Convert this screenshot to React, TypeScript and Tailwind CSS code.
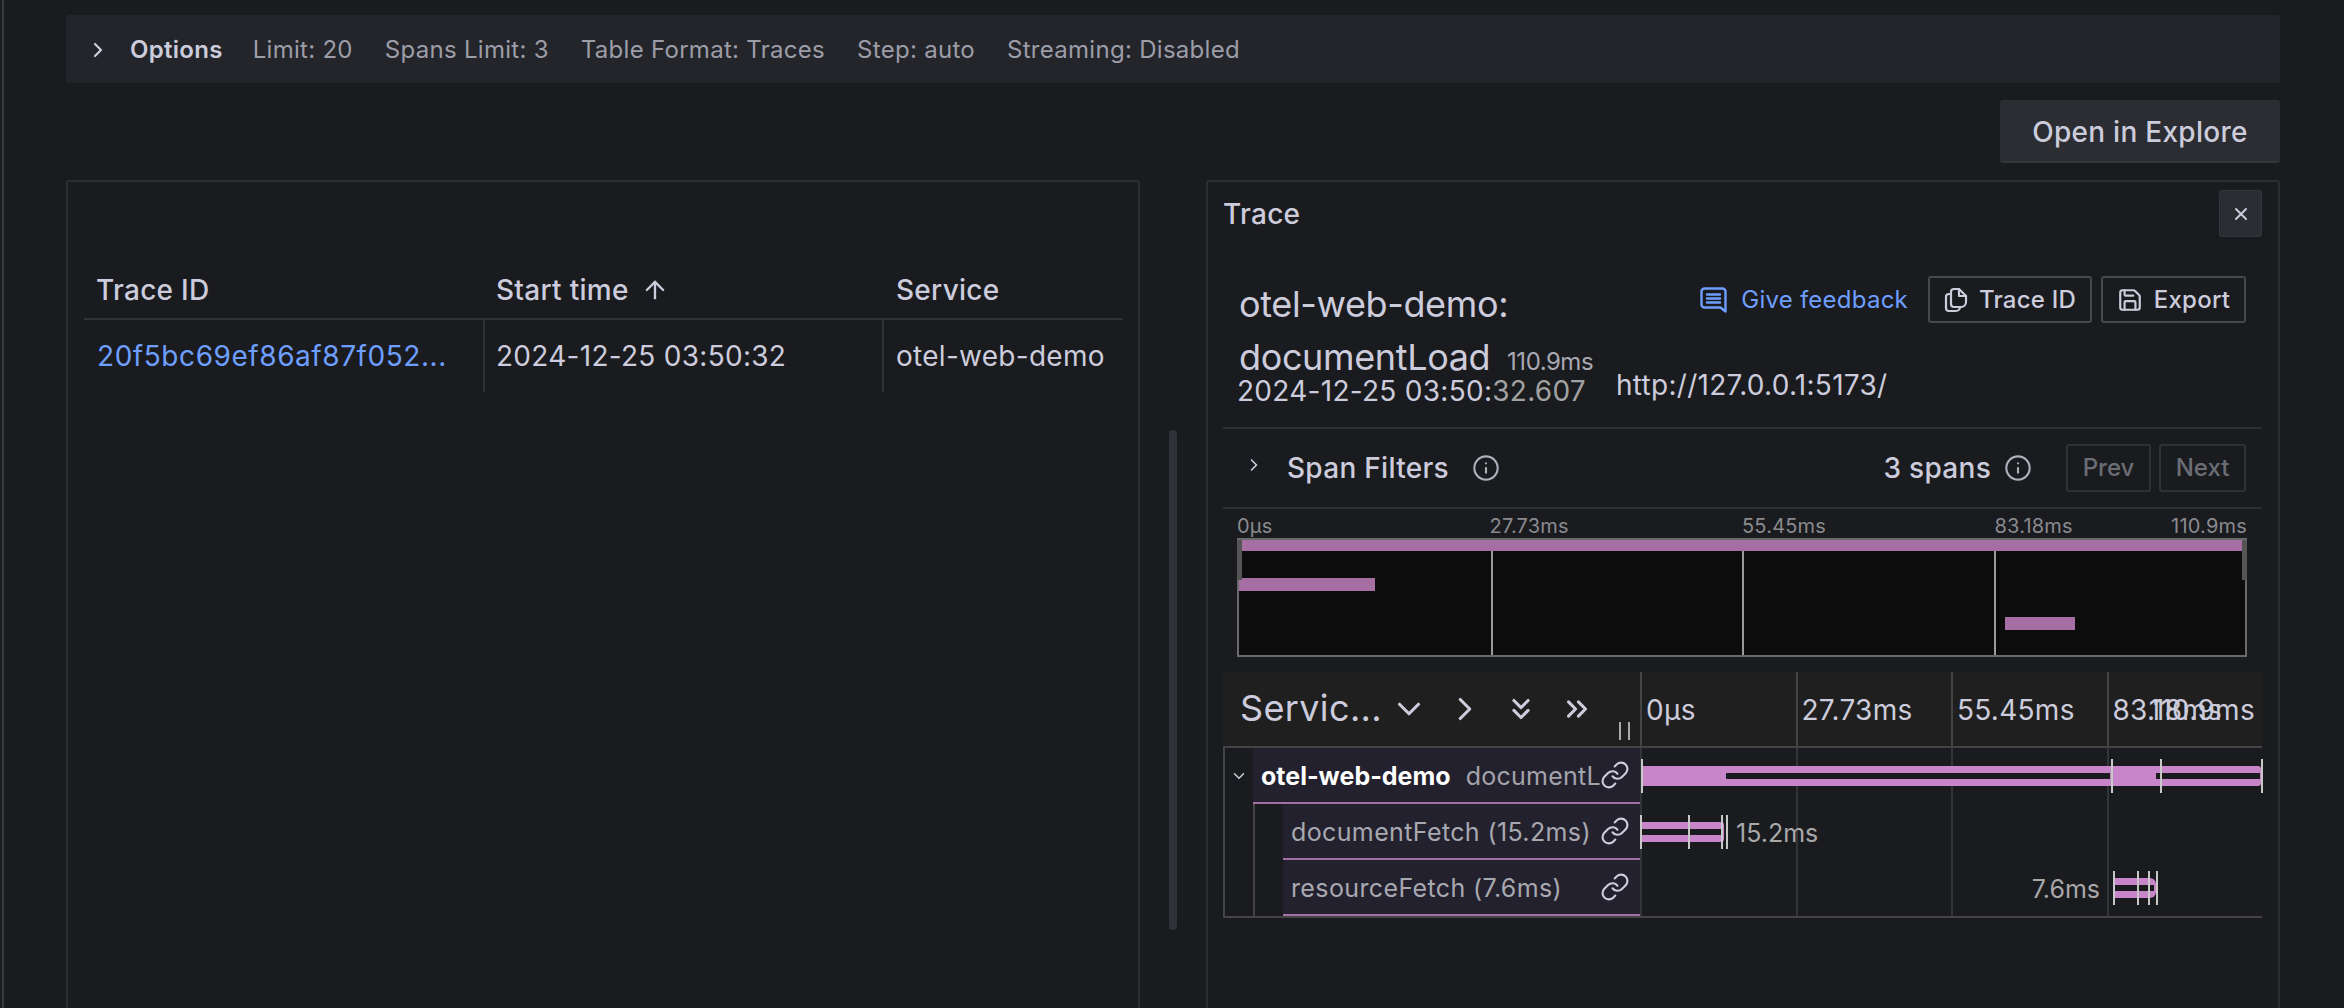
import React from 'react';
import { ArrowUp, ChevronDown, ChevronRight, ChevronsDown, ChevronsRight, Info, Link, Save, X } from 'lucide-react';

const options = ['Limit: 20', 'Spans Limit: 3', 'Table Format: Traces', 'Step: auto', 'Streaming: Disabled'];
const ticks = ['0µs', '27.73ms', '55.45ms', '83.18ms'];

const FeedbackIcon = () => (
  <svg viewBox="0 0 27 26" className="w-[27px] h-[26px]" fill="none" stroke="currentColor" strokeWidth="2.4" strokeLinejoin="round" strokeLinecap="round">
    <path d="M4.5 1.5h18a3 3 0 0 1 3 3v20l-5-4h-16a3 3 0 0 1-3-3v-13a3 3 0 0 1 3-3z" />
    <path d="M7 7.5h13M7 11.5h13M7 15.5h13" />
  </svg>
);

const FilesIcon = () => (
  <svg viewBox="0 0 24 26" className="w-[24px] h-[26px]" fill="none" stroke="currentColor" strokeWidth="2.2" strokeLinejoin="round" strokeLinecap="round">
    <path d="M10 2h5l7 7v6a5 5 0 0 1-5 5h-7a3 3 0 0 1-3-3V5a3 3 0 0 1 3-3z" />
    <path d="M15 2v7h7" />
    <path d="M7 7H5a3 3 0 0 0-3 3v11a3 3 0 0 0 3 3h7a4 4 0 0 0 4-4" />
  </svg>
);

const SpanRow = ({ depth, children, bars }: { depth: number; children: React.ReactNode; bars: React.ReactNode }) => (
  <div className="flex h-[56px]">
    <div className="w-[415px] flex shrink-0">
      {depth === 0 ? (
        <div className="w-[28px] flex items-center justify-center text-[#ccccdc]">
          <ChevronDown size={18} strokeWidth={2} />
        </div>
      ) : (
        <>
          <div className="w-[28px]" />
          <div className="w-[30px] border-l-2 border-[#444444]" />
        </>
      )}
      <div className="flex-1 min-w-0 flex items-center bg-[#23212e] border-b-2 border-[#a56fa4] pl-[8px] pr-[10px]">
        <div className="flex-1 min-w-0 overflow-hidden whitespace-nowrap text-[25px] pt-[4px]">{children}</div>
        <Link size={30} strokeWidth={1.7} className="shrink-0 text-[#ccccdc]" />
      </div>
    </div>
    <div className="relative flex-1">{bars}</div>
  </div>
);

const Tick = ({ className }: { className: string }) => (
  <div className={`absolute top-[11px] h-[34px] w-[2px] bg-[#c8c8c8] ${className}`} />
);

export default function App() {
  return (
    <div className="w-full h-screen overflow-hidden bg-[#1a1b1f] pl-[2px] font-[Inter,sans-serif] text-[#ccccdc]">
      <div className="h-full border-l-2 border-[#3a3b3e] pl-[62px] pr-[64px] pt-[15px]">
        <div className="h-[68px] flex items-center rounded-[3px] bg-[#23252b] pl-[20px] pt-[1px] text-[24px] tracking-[0.012em]">
          <ChevronRight size={24} strokeWidth={2.2} className="mr-[20px]" />
          <span className="font-semibold mr-[30px]">Options</span>
          <div className="flex gap-[32px] text-[#9d9da8]">
            {options.map((o) => (
              <span key={o}>{o}</span>
            ))}
          </div>
        </div>

        <div className="flex justify-end mt-[17px]">
          <button className="h-[63px] w-[280px] pt-[2px] rounded-[3px] bg-[#2b2d32] border-b-2 border-[#34363b] text-[28px] font-medium tracking-[0.01em]">Open in Explore</button>
        </div>

        <div className="flex mt-[17px] h-[900px]">
          <div className="w-[1074px] shrink-0 border-2 border-[#2c2e33] rounded-[3px] pt-[78px] px-[16px]">
            <div className="grid grid-cols-[399px_399px_241px] text-[28px] tracking-[0.01em]">
              <div className="col-span-3 grid grid-cols-[399px_399px_241px] h-[60px] pt-[1px] items-center border-b-2 border-[#2f3136] font-medium">
                <div className="pl-[12px]">Trace ID</div>
                <div className="pl-[13px] flex items-center gap-[12px]">
                  Start time <ArrowUp size={28} strokeWidth={2} />
                </div>
                <div className="pl-[14px]">Service</div>
              </div>
              <div className="h-[72px] flex items-center pl-[13px] text-[#6e9fff] tracking-[0.02em] whitespace-nowrap">20f5bc69ef86af87f052...</div>
              <div className="h-[72px] flex items-center pl-[11px] border-l-2 border-[#2f3136] whitespace-nowrap">2024-12-25 03:50:32</div>
              <div className="h-[72px] flex items-center pl-[12px] border-l-2 border-[#2f3136] whitespace-nowrap">otel-web-demo</div>
            </div>
          </div>

          <div className="w-[66px] shrink-0 pt-[250px] pl-[29px]">
            <div className="w-[8px] h-[500px] rounded-full bg-[#2f3137]" />
          </div>

          <div className="w-[1074px] shrink-0 border-2 border-[#2c2e33] rounded-[3px] pl-[15px] pr-[16px] pt-[8px]">
            <div className="h-[47px] flex items-center justify-between">
              <span className="text-[28px] font-medium tracking-[0.01em]">Trace</span>
              <button className="w-[43px] h-[47px] flex items-center justify-center rounded-[3px] bg-[#2b2d32] border border-[#34363b]">
                <X size={20} strokeWidth={2.4} />
              </button>
            </div>

            <div className="flex justify-between items-start mt-[39px]">
              <div className="pt-[2px] min-w-0 flex-1">
                <div className="pl-[16px] text-[36px] leading-[53px] tracking-[-0.01em]">
                  <div>otel-web-demo:</div>
                  <div className="whitespace-nowrap">
                    documentLoad <span className="text-[24px] leading-none text-[#a8a8b3] tracking-[-0.02em] ml-[7px]">110.9ms</span>
                  </div>
                </div>
                <div className="-mt-[9px] pl-[14px] flex items-start whitespace-nowrap">
                  <span className="text-[28px] leading-[30px] pt-[1px] tracking-[0.01em]">
                    2024-12-25 03:50:<span className="text-[#a2a2a2]">32.607</span>
                  </span>
                  <span className="ml-[30px] -mt-[5px] text-[28px] leading-[30px] tracking-[0.01em]">http://127.0.0.1:5173/</span>
                </div>
              </div>
              <div className="flex items-center shrink-0 mr-[16px]">
                <FeedbackWrap />
                <button className="ml-[20px] h-[47px] w-[164px] flex items-center justify-center gap-[11px] rounded-[3px] border-2 border-[#46484e] text-[24px] font-medium tracking-[0.01em] whitespace-nowrap">
                  <FilesIcon /> Trace ID
                </button>
                <button className="ml-[9px] h-[47px] w-[145px] flex items-center justify-center gap-[11px] rounded-[3px] border-2 border-[#46484e] text-[24px] font-medium tracking-[0.01em]">
                  <Save size={26} strokeWidth={2} /> Export
                </button>
              </div>
            </div>

            <div className="mt-[21px] h-[82px] flex items-center border-y-2 border-[#2c2e33]">
              <ChevronRight size={20} strokeWidth={2} className="ml-[21px] mb-[6px]" />
              <span className="ml-[23px] text-[28px] font-medium tracking-[0.01em]">Span Filters</span>
              <Info size={28} strokeWidth={1.8} className="ml-[23px] text-[#b0b0ba]" />
              <div className="ml-auto flex items-center mr-[16px]">
                <span className="text-[28px] font-medium tracking-[0.01em]">3 spans</span>
                <Info size={28} strokeWidth={1.8} className="ml-[13px] text-[#b0b0ba]" />
                <button className="ml-[34px] h-[48px] w-[85px] rounded-[3px] border-2 border-[#2f3136] text-[24px] font-medium text-[#6b6d74]">Prev</button>
                <button className="ml-[8px] h-[48px] w-[87px] rounded-[3px] border-2 border-[#2f3136] text-[24px] font-medium text-[#6b6d74]">Next</button>
              </div>
            </div>

            <div className="ml-[14px] w-[1010px]">
              <div className="grid grid-cols-4 h-[29px] pt-[2px] items-center text-[20px] tracking-[0.01em] text-[#8a8a8e]">
                <span>0µs</span>
                <span>27.73ms</span>
                <span>55.45ms</span>
                <div className="flex justify-between">
                  <span>83.18ms</span>
                  <span>110.9ms</span>
                </div>
              </div>
              <div className="relative h-[119px] border-2 border-[#6a6a6a] bg-[#0c0c0c]">
                <div className="absolute inset-0 grid grid-cols-4">
                  <div />
                  <div className="border-l-2 border-[#9a9a9a]" />
                  <div className="border-l-2 border-[#9a9a9a]" />
                  <div className="border-l-2 border-[#9a9a9a]" />
                </div>
                <div className="absolute left-0 right-[3px] top-0 h-[11px] bg-[#a56fa4]" />
                <div className="absolute left-0 top-[38px] h-[13px] w-[136px] bg-[#a56fa4]" />
                <div className="absolute left-[766px] top-[77px] h-[13px] w-[70px] bg-[#a56fa4]" />
                <div className="absolute -left-[2px] top-0 h-[40px] w-[5px] bg-[#555555]" />
                <div className="absolute -right-[2px] top-0 h-[40px] w-[5px] bg-[#555555]" />
              </div>
            </div>

            <div className="mt-[15px] w-[1039px]">
              <div className="flex h-[76px] bg-[#1f1f1f] border-b-2 border-[#444444]">
                <div className="relative w-[417px] shrink-0 flex items-center pl-[17px]">
                  <span className="text-[36px] tracking-[0.01em] -mt-[2px] w-[141px] shrink-0">Servic...</span>
                  <div className="w-[56px] flex justify-center"><ChevronDown size={38} strokeWidth={2} /></div>
                  <div className="w-[56px] flex justify-center"><ChevronRight size={38} strokeWidth={2} /></div>
                  <div className="w-[56px] flex justify-center"><ChevronsDown size={34} strokeWidth={2.2} /></div>
                  <div className="w-[56px] flex justify-center"><ChevronsRight size={34} strokeWidth={2.2} /></div>
                  <div className="absolute left-[396px] top-[50px] h-[18px] w-[11px] border-x-2 border-[#aaaaaa]" />
                </div>
                <div className="relative flex-1 grid grid-cols-4 text-[28px] tracking-[0.01em] whitespace-nowrap">
                  {ticks.map((t) => (
                    <div key={t} className="border-l-2 border-[#444444] pl-[4px] pt-[1px] flex items-center">{t}</div>
                  ))}
                  <span className="absolute right-[7px] top-[17px]">110.9ms</span>
                </div>
              </div>

              <div className="relative border-l-2 border-b-2 border-[#444444]">
                <div className="absolute left-[415px] right-0 inset-y-0 grid grid-cols-4">
                  <div className="border-l-2 border-[#333438]" />
                  <div className="border-l-2 border-[#333438]" />
                  <div className="border-l-2 border-[#333438]" />
                  <div className="border-l-2 border-[#333438]" />
                </div>

                <SpanRow
                  depth={0}
                  bars={
                    <>
                      <div className="absolute left-[2px] top-[18px] w-[619px] h-[20px] rounded-r-[3px] bg-[#c885c9]" />
                      <div className="absolute left-[86px] top-[25px] w-[384px] h-[6px] bg-[#1a1b1f]" />
                      <div className="absolute left-[516px] top-[25px] w-[104px] h-[6px] bg-[#1a1b1f]" />
                      <Tick className="left-[1px]" />
                      <Tick className="left-[471px]" />
                      <Tick className="left-[520px]" />
                      <Tick className="left-[621px]" />
                    </>
                  }
                >
                  <span className="font-bold text-white">otel-web-demo</span>
                  <span className="ml-[15px] text-[#a3a3ab] tracking-[0.01em]">documentLoad</span>
                </SpanRow>

                <SpanRow
                  depth={1}
                  bars={
                    <>
                      <div className="absolute left-0 top-[18px] w-[84px] h-[20px] rounded-r-[3px] bg-[#c885c9]" />
                      <div className="absolute left-[2px] top-[25px] w-[80px] h-[6px] bg-[#1a1b1f]" />
                      <Tick className="left-0" />
                      <Tick className="left-[48px]" />
                      <Tick className="left-[81px]" />
                      <Tick className="left-[86px]" />
                      <span className="absolute left-[96px] top-[14px] text-[25px] leading-[30px] text-[#a8a8a8]">15.2ms</span>
                    </>
                  }
                >
                  <span className="text-[#a8a8b0] tracking-[0.015em]">documentFetch (15.2ms)</span>
                </SpanRow>

                <SpanRow
                  depth={1}
                  bars={
                    <>
                      <div className="absolute left-[473px] top-[18px] w-[43px] h-[20px] rounded-r-[6px] bg-[#c885c9]" />
                      <div className="absolute left-[475px] top-[25px] w-[39px] h-[6px] bg-[#1a1b1f]" />
                      <Tick className="left-[473px]" />
                      <Tick className="left-[497px]" />
                      <Tick className="left-[508px]" />
                      <Tick className="left-[516px]" />
                      <span className="absolute right-[162px] top-[14px] text-[25px] leading-[30px] text-[#a8a8a8]">7.6ms</span>
                    </>
                  }
                >
                  <span className="text-[#a8a8b0] tracking-[0.015em]">resourceFetch (7.6ms)</span>
                </SpanRow>
              </div>
            </div>
          </div>
        </div>
      </div>
    </div>
  );
}

function FeedbackWrap() {
  return (
    <a className="flex items-center gap-[14px] text-[#6e9fff] text-[24px] tracking-[0.01em] whitespace-nowrap">
      <FeedbackIcon />
      Give feedback
    </a>
  );
}
